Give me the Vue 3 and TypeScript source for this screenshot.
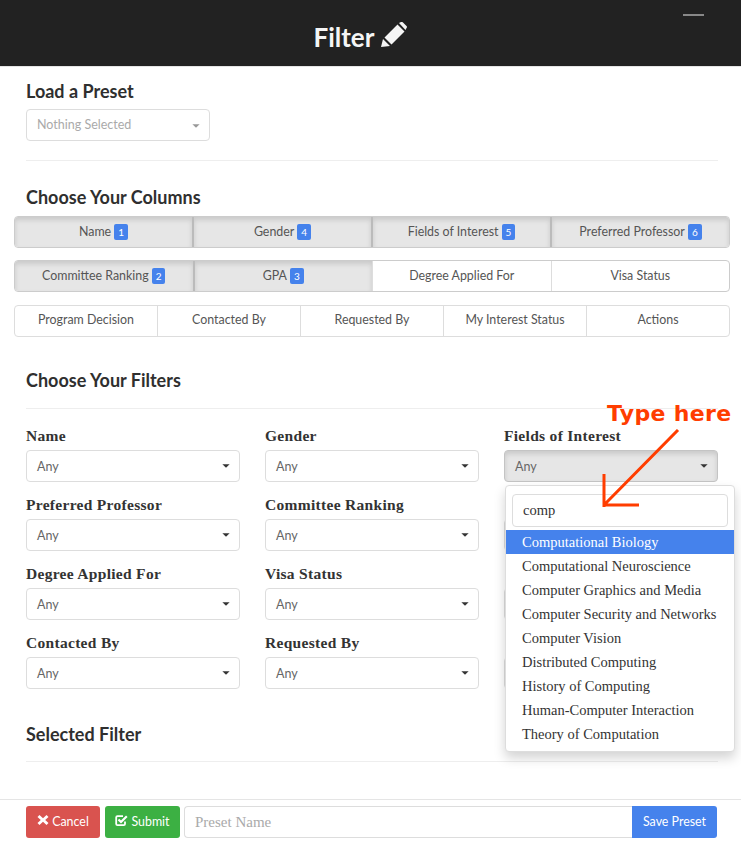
<script setup lang="ts">
interface Col { name: string; badge?: number }
const rows: Col[][] = [
  [{ name: 'Name', badge: 1 }, { name: 'Gender', badge: 4 }, { name: 'Fields of Interest', badge: 5 }, { name: 'Preferred Professor', badge: 6 }],
  [{ name: 'Committee Ranking', badge: 2 }, { name: 'GPA', badge: 3 }, { name: 'Degree Applied For' }, { name: 'Visa Status' }],
  [{ name: 'Program Decision' }, { name: 'Contacted By' }, { name: 'Requested By' }, { name: 'My Interest Status' }, { name: 'Actions' }],
]
const filters: string[] = [
  'Name', 'Gender', 'Fields of Interest',
  'Preferred Professor', 'Committee Ranking', '',
  'Degree Applied For', 'Visa Status', '',
  'Contacted By', 'Requested By', '',
]
const options: string[] = [
  'Computational Biology', 'Computational Neuroscience', 'Computer Graphics and Media',
  'Computer Security and Networks', 'Computer Vision', 'Distributed Computing',
  'History of Computing', 'Human-Computer Interaction', 'Theory of Computation',
]
</script>

<template>
  <div class="page">
    <header class="top">
      <span class="dash"></span>
      <h1 class="title">Filter
        <svg class="pencil" width="26" height="26" viewBox="0 0 26 26"><path d="M0 25 L2 17 L9 24 Z M3.5 15.5 L16.5 2.5 L23.5 9.5 L10.5 22.5 Z M18 1 L20 0 Q21 -0.5 22 0.5 L25.5 4 Q26.5 5 25.5 6 L24.5 8 Z" fill="#f5f5f5"/></svg>
      </h1>
    </header>

    <main class="body">
      <h2 class="h first">Load a Preset</h2>
      <div class="sel preset"><span>Nothing Selected</span><i class="caret light"></i></div>
      <hr class="rule r1" />

      <h2 class="h cols">Choose Your Columns</h2>
      <div class="groups">
        <div v-for="(row, i) in rows" :key="i" class="group">
          <div v-for="c in row" :key="c.name" class="tog" :class="{ on: c.badge }">
            {{ c.name }}<b v-if="c.badge" class="badge">{{ c.badge }}</b>
          </div>
        </div>
      </div>

      <h2 class="h fil">Choose Your Filters</h2>
      <hr class="rule r2" />
      <div class="grid">
        <div v-for="(f, idx) in filters" :key="idx" class="field">
          <label class="lab">{{ f }}</label>
          <div class="sel any" :class="{ open: f === 'Fields of Interest' }"><span v-if="f">Any</span><i v-if="f" class="caret"></i></div>
          <div v-if="f === 'Fields of Interest'" class="drop">
            <div class="search">comp</div>
            <ul class="list">
              <li v-for="(o, n) in options" :key="o" :class="{ hi: n === 0 }">{{ o }}</li>
            </ul>
          </div>
        </div>
      </div>

      <h2 class="h sel-h">Selected Filter</h2>
      <hr class="rule r3" />
    </main>

    <footer class="foot">
      <button class="btn red">
        <svg width="12" height="12" viewBox="0 0 12 12"><path d="M2.5 1 L6 4.2 L9.5 1 L11.5 3 L8.2 6 L11.5 9 L9.5 11 L6 7.8 L2.5 11 L0.5 9 L3.8 6 L0.5 3 Z" fill="#fff"/></svg>
        Cancel
      </button>
      <button class="btn green">
        <svg width="13" height="13" viewBox="0 0 13 13"><path d="M10 7.5 V10 Q10 11.2 8.8 11.2 H2.5 Q1.2 11.2 1.2 10 V3.5 Q1.2 2.2 2.5 2.2 H8" fill="none" stroke="#fff" stroke-width="1.8"/><path d="M3.5 5.5 L6 8 L11.8 2.2" fill="none" stroke="#fff" stroke-width="2.2"/></svg>
        Submit
      </button>
      <div class="name">
        <div class="ph">Preset Name</div>
        <button class="save">Save Preset</button>
      </div>
    </footer>

    <div class="note">Type here</div>
    <svg class="arrow" width="80" height="80" viewBox="0 0 80 80">
      <path d="M76 1 L2 76 M2 45 V78 M0.5 76 H37" fill="none" stroke="#ff3d00" stroke-width="3"/>
    </svg>
  </div>
</template>

<style scoped>
.page { position: relative; width: 741px; height: 851px; overflow: hidden; background: #fff; font-family: Lato, "Liberation Sans", sans-serif; color: #333; }
.top { height: 66px; background: #222; border-bottom: 1px solid #e5e5e5; display: flex; justify-content: center; position: relative; padding-right: 20px; box-sizing: content-box; }
.dash { position: absolute; left: 683px; top: 14px; width: 21px; height: 2px; background: #888; }
.title { margin: 21px 0 0; font-size: 26px; line-height: 32px; font-weight: 700; color: #f5f5f5; display: flex; align-items: flex-start; gap: 7px; height: 32px; }
.pencil { margin-top: 1px; }
.body { padding: 0 23px 0 26px; }
.h { margin: 0; font-size: 18px; line-height: 20px; font-weight: 700; color: #2f2f2f; }
.first { padding-top: 14px; }
.sel { height: 32px; box-sizing: border-box; border: 1px solid #ddd; border-radius: 4px; padding: 0 10px 2px; display: flex; align-items: center; justify-content: space-between; font-size: 12.5px; color: #666; background: #fff; }
.any { padding-bottom: 0; }
.preset { width: 184px; margin-top: 8px; color: #aaa; }
.open { background: #e6e6e6; border-color: #c4c4c4; box-shadow: inset 0 3px 5px rgba(0,0,0,.125); }
.caret { width: 0; height: 0; border-left: 4px solid transparent; border-right: 4px solid transparent; border-top: 4px solid #333; margin-right: -1px; margin-top: 0; transform: scale(.9); }
.caret.light { border-top-color: #999; margin-top: 3px; }
.rule { border: 0; border-top: 1px solid #eee; margin: 0; }
.r1 { margin-top: 19px; }
.cols { margin-top: 26px; }
.groups { margin: 9px -12px 0 -12px; display: flex; flex-direction: column; gap: 12px; }
.group { display: flex; height: 32px; border: 1px solid #ddd; border-radius: 4px; box-sizing: border-box; overflow: hidden; }
.group:last-child { margin-top: 1px; }
.tog { flex: 1 1 0; min-width: 0; display: flex; align-items: center; justify-content: center; font-size: 12.4px; color: #555; border-left: 1px solid #ddd; white-space: nowrap; padding-bottom: 2px; }
.group:last-child .tog { padding-bottom: 3px; }
.tog:first-child { border-left: 0; }
.on { background: #e6e6e6; box-shadow: inset 0 3px 5px rgba(0,0,0,.125); border-left: 2px solid #bbb; }
.group:has(.on) { border-color: #ccc; }
.badge { display: inline-block; position: relative; top: 1px; margin-left: 3px; background: #4582ec; color: #fff; border-radius: 2px; font-size: 10px; font-weight: 400; padding: 0 4px; line-height: 16px; }
.fil { margin-top: 33px; }
.r2 { margin-top: 18px; }
.grid { display: grid; grid-template-columns: repeat(3, 214px); column-gap: 25px; row-gap: 15px; margin-top: 19px; }
.field { position: relative; }
.lab { display: block; height: 18px; margin-bottom: 4px; font: 700 15.5px/16px "Liberation Serif", serif; letter-spacing: .3px; color: #333; }
.drop { position: absolute; z-index: 2; left: 1px; top: 57px; width: 230px; height: 267px; box-sizing: border-box; background: #fff; border: 1px solid #ddd; border-radius: 4px; box-shadow: 0 6px 12px rgba(0,0,0,.175); padding-top: 8px; }
.search { margin: 0 6px; height: 33px; box-sizing: border-box; border: 1px solid #ddd; border-radius: 4px; padding: 0 10px; display: flex; align-items: center; font: 14.5px "Liberation Serif", serif; color: #333; }
.list { list-style: none; margin: 3px 0 0; padding: 0; }
.list li { height: 24px; padding-left: 16px; font: 14.5px/24px "Liberation Serif", serif; color: #333; white-space: nowrap; }
.list .hi { background: #4582ec; color: #fff; }
.sel-h { margin-top: 35px; }
.r3 { margin-top: 17px; }
.foot { position: absolute; left: 0; right: 0; top: 799px; border-top: 1px solid #e5e5e5; padding: 6px 24px 0 26px; display: flex; gap: 5px; }
.btn { height: 32px; border: 0; border-radius: 3px; color: #fff; font: 12.4px Lato, sans-serif; display: flex; align-items: center; justify-content: center; gap: 3px; padding: 0 0 2px; }
.btn svg { margin-top: -2px; }
.red { width: 74px; background: #d9534f; }
.green { width: 75px; background: #3cb043; }
.name { flex: 1; display: flex; margin-left: -1px; height: 32px; }
.ph { flex: 1; box-sizing: border-box; border: 1px solid #ddd; border-right: 0; border-radius: 4px 0 0 4px; font: 15px/30px "Liberation Serif", serif; color: #aaa; padding-left: 10px; }
.save { width: 85px; border: 0; border-radius: 0 3px 3px 0; background: #4582ec; color: #fff; font: 12.4px Lato, sans-serif; padding: 0 0 2px; }
.note { position: absolute; z-index: 3; left: 607px; top: 399px; font: 700 22px/30px "DejaVu Sans", sans-serif; color: #ff3d00; white-space: nowrap; letter-spacing: .35px; }
.arrow { position: absolute; z-index: 3; left: 602px; top: 429px; }
</style>
